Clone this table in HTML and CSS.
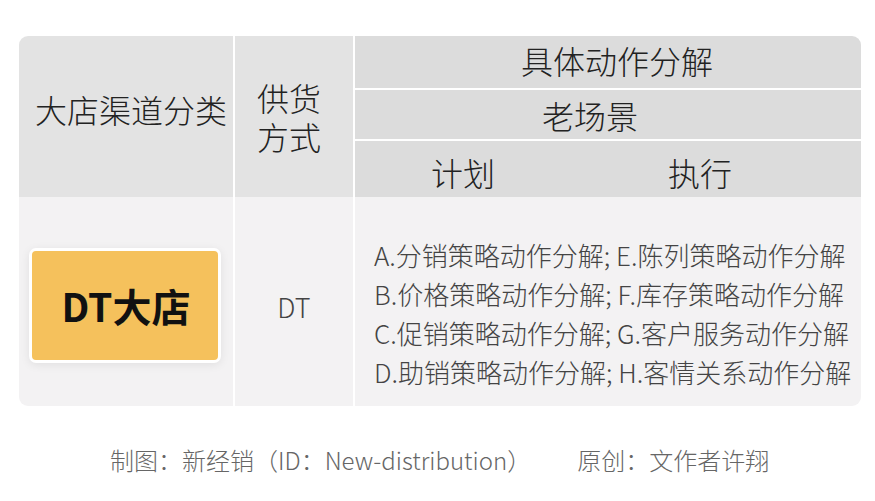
FILE: index.html
```html
<!DOCTYPE html>
<html lang="zh">
<head>
<meta charset="utf-8">
<link rel="stylesheet" href="styles.css">
</head>
<body>
<div class="page">
  <div class="table">
    <div class="h h1"><span class="t-channel">大店渠道分类</span></div>
    <div class="h h2"><span class="t-supply">供货<br>方式</span></div>
    <div class="h3">
      <div class="r r1">具体动作分解</div>
      <div class="r r2">老场景</div>
      <div class="r r3"><span class="plan">计划</span><span class="exec">执行</span></div>
    </div>
    <div class="b b1"><div class="badge"><span>DT大店</span></div></div>
    <div class="b b2"><span class="dt">DT</span></div>
    <div class="b b3">
      <div class="lines">
        <div>A.分销策略动作分解; E.陈列策略动作分解</div>
        <div>B.价格策略动作分解; F.库存策略动作分解</div>
        <div>C.促销策略动作分解; G.客户服务动作分解</div>
        <div>D.助销策略动作分解; H.客情关系动作分解</div>
      </div>
    </div>
  </div>
  <div class="footer"><span>制图：新经销（ID：New-distribution）</span><span class="author">原创：文作者许翔</span></div>
</div>
</body>
</html>
```
FILE: styles.css
```css
* { box-sizing: border-box; }
html, body { margin: 0; padding: 0; background: #ffffff; }
body { font-family: "Noto Sans CJK SC", "Noto Sans", sans-serif; color: #222; font-weight: 300; }
.page { width: 875px; height: 501px; padding: 36px 0 0 19px; }
.table {
  display: grid;
  grid-template-columns: 214px 118px 506px;
  grid-template-rows: 161px 209px;
  column-gap: 2px;
  width: 842px;
}
.h { background: #e3e3e3; display: flex; align-items: center; justify-content: center; font-size: 32px; }
.h1 { border-top-left-radius: 9px; padding: 0 0 16px 10px; }
.t-channel { line-height: 1; }
.h2 { line-height: 39px; padding-right: 10px; }
.t-supply { display: block; }
.h3 { display: flex; flex-direction: column; gap: 2px; border-top-right-radius: 9px; overflow: hidden; }
.r { background: #dcdcdc; font-size: 32px; display: flex; align-items: center; white-space: nowrap; }
.r1 { height: 52px; padding-left: 166px; padding-bottom: 4px; }
.r2 { height: 49px; padding-left: 187px; }
.r3 { height: 56px; padding-top: 6px; }
.plan { width: 313px; padding-left: 76px; }
.b { background: #f3f2f3; display: flex; align-items: center; justify-content: center; }
.b1 { border-bottom-left-radius: 9px; padding-top: 8px; }
.badge {
  width: 192px; height: 115px;
  background: #f5c15c;
  border: 3px solid #ffffff;
  border-radius: 7px;
  box-shadow: 0 2px 10px rgba(0,0,0,0.08);
  display: flex; align-items: center; justify-content: center;
  margin-left: -2px;
}
.badge span { font-size: 39px; font-weight: 700; color: #111; line-height: 1; margin-left: 2px; }
.b2 { padding-top: 10px; }
.dt { font-size: 27px; color: #444; line-height: 1; }
.b3 { border-bottom-right-radius: 9px; justify-content: flex-start; padding: 22px 0 0 19px; }
.lines { font-size: 26px; line-height: 39px; color: #444; white-space: nowrap; }
.footer { margin: 36px 0 0 91px; font-size: 24px; color: #666; white-space: nowrap; display: flex; }
.author { margin-left: 46px; }
```
